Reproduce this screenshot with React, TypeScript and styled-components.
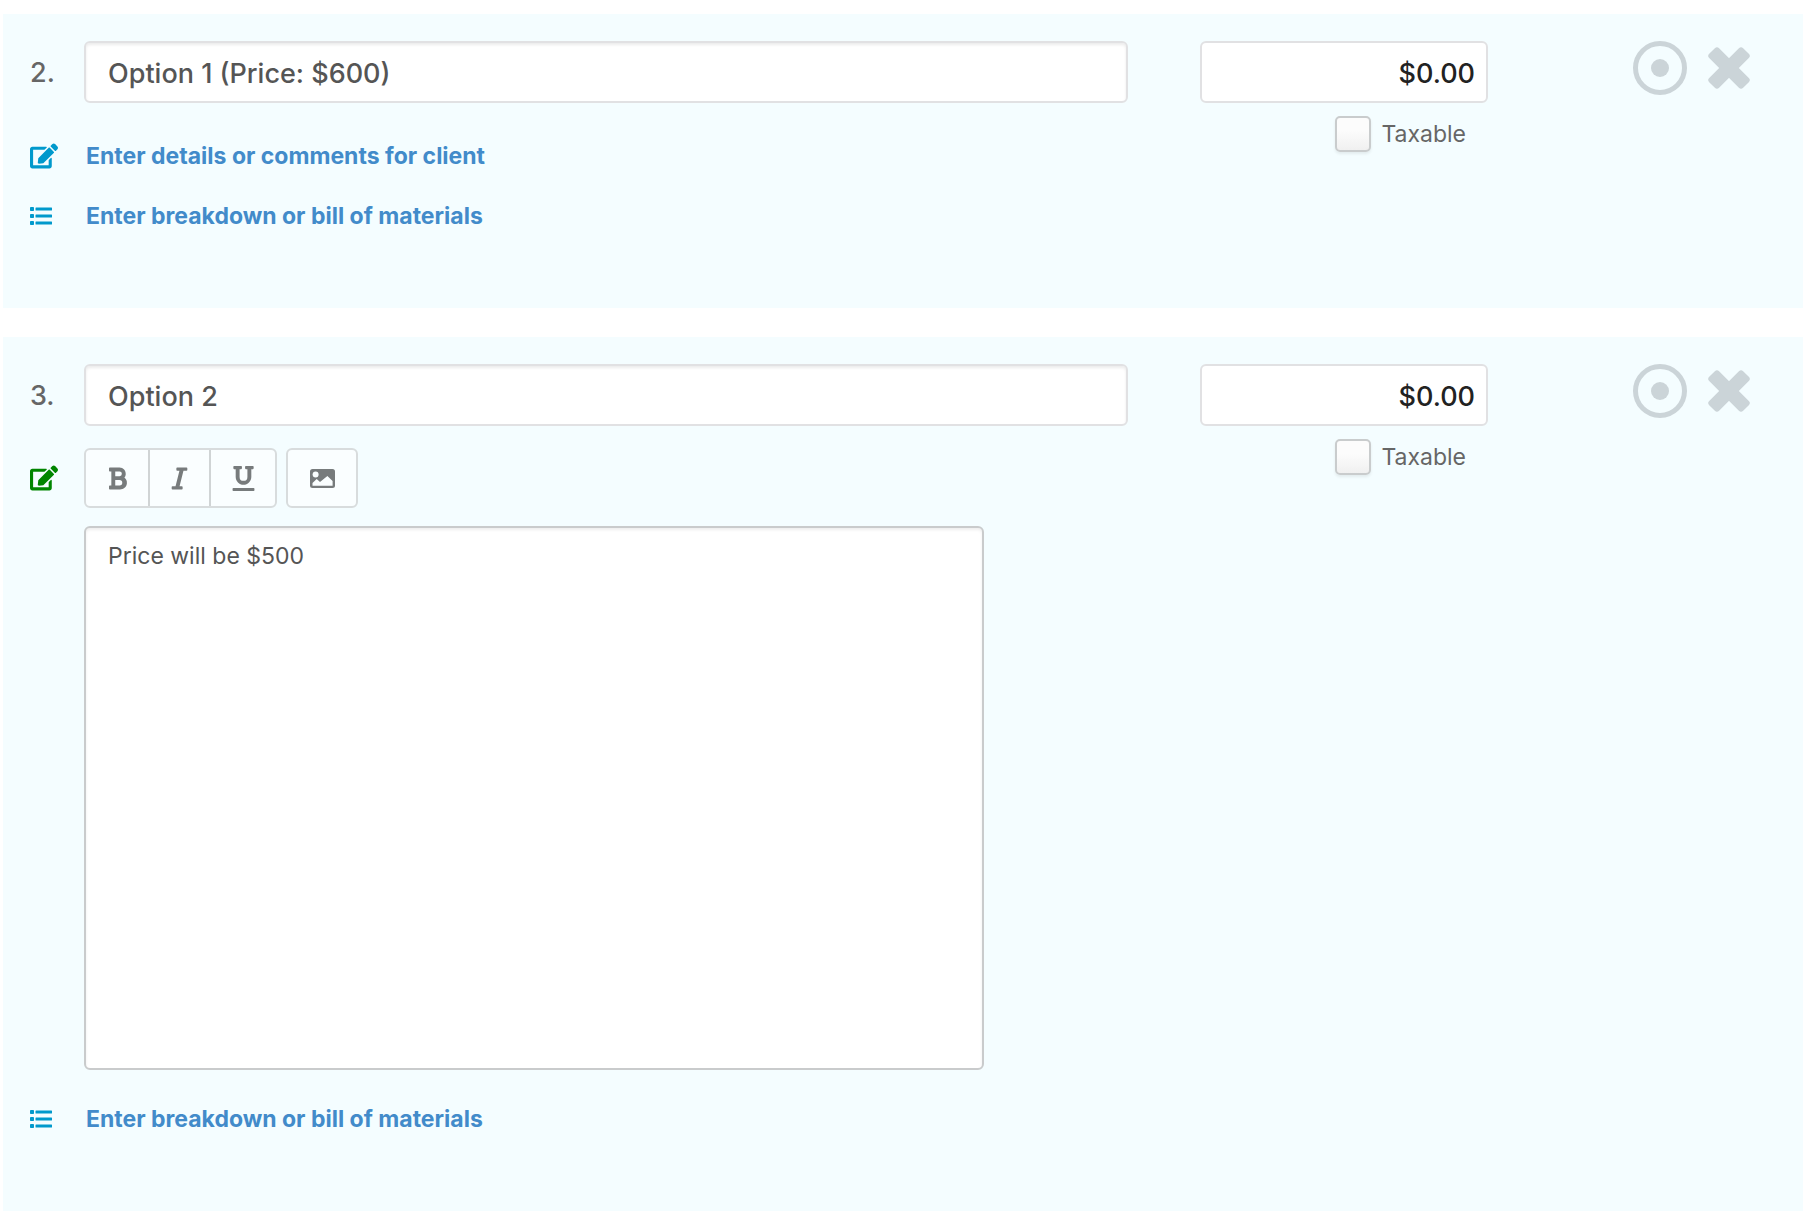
import React, { useId, useState } from 'react';
import styled, { createGlobalStyle } from 'styled-components';
import { FaBold, FaEdit, FaItalic, FaUnderline } from 'react-icons/fa';

const GlobalStyle = createGlobalStyle`
  *, *::before, *::after { box-sizing: border-box; }
  body {
    margin: 0;
    background: #fff;
    color: #666;
    font-family: Inter, "Liberation Sans", sans-serif;
    font-size: 23px;
    line-height: 30px;
  }
  button, input, textarea { font: inherit; margin: 0; }
`;

const Page = styled.main`
  display: flex;
  flex-direction: column;
  gap: 29px;
  padding: 14px 3px 4px;
`;

const Panel = styled.section`
  display: flex;
  align-items: flex-start;
  padding: 27px 53px 62px 27px;
  background: #f4fdff;
`;

const Main = styled.div`
  flex: 1;
  min-width: 0;
`;

const Row = styled.div<{ $gap?: number }>`
  display: flex;
  align-items: center;
  margin-top: ${(p) => p.$gap ?? 0}px;
`;

const Gutter = styled.div<{ $color?: string }>`
  display: flex;
  align-items: center;
  flex: 0 0 54px;
  color: ${(p) => p.$color ?? '#0099cc'};
`;

const ItemNumber = styled(Gutter)`
  padding-top: 2px;
  color: #666;
  font-size: 27px;
  font-weight: 500;
`;

const Field = styled.input`
  width: 100%;
  height: 62px;
  padding: 2px 22px 0;
  border: 2px solid #e1e1e3;
  border-radius: 6px;
  background: #fff;
  color: #555;
  font-size: 27px;
  font-weight: 500;
  outline: none;
`;

const TitleField = styled(Field)`
  box-shadow: inset 0 2px 3px rgba(0, 0, 0, 0.08);
`;

const PriceField = styled(Field)`
  padding: 2px 11px 0;
  color: #222;
  text-align: right;
`;

const LinkRow = styled(Row)`
  height: 60px;
`;

const ActionLink = styled.a`
  padding-left: 2px;
  color: #428bca;
  font-weight: 700;
  text-decoration: none;
`;

const Toolbar = styled.div`
  display: flex;
  gap: 9px;
`;

const ButtonGroup = styled.div`
  display: flex;
  border: 2px solid #d8dcdd;
  border-radius: 6px;
  background: #fafeff;
`;

const ToolButton = styled.button<{ $width: number }>`
  display: flex;
  align-items: center;
  justify-content: center;
  width: ${(p) => p.$width}px;
  height: 56px;
  padding: 0;
  border: 0;
  background: transparent;
  color: #777b7c;
  cursor: pointer;

  & + & { border-left: 2px solid #d0d4d5; }
`;

const Comments = styled.textarea`
  display: block;
  width: 100%;
  max-width: 900px;
  height: 544px;
  padding: 13px 22px;
  border: 2px solid #c9cbcc;
  border-radius: 6px;
  background: #fff;
  box-shadow: inset 0 2px 3px rgba(0, 0, 0, 0.07);
  color: #555;
  resize: none;
  outline: none;
`;

const PriceColumn = styled.div`
  flex: 0 0 288px;
  margin-left: 72px;
`;

const TaxableLabel = styled.label`
  display: flex;
  align-items: center;
  gap: 10px;
  margin: 13px 22px 0 0;
  justify-content: flex-end;
`;

const Checkbox = styled.input`
  appearance: none;
  width: 36px;
  height: 36px;
  border: 2px solid #c9cccd;
  border-radius: 5px;
  background: linear-gradient(#fcfcfc 40%, #f0f0f0);
  box-shadow: 0 2px 3px rgba(0, 0, 0, 0.07);

  &:checked { background: #0099cc; }
`;

const Actions = styled.div`
  display: flex;
  gap: 20px;
  margin-left: 144px;
`;

const IconButton = styled.button`
  display: flex;
  align-items: center;
  height: 54px;
  padding: 0;
  border: 0;
  background: none;
  color: #cbd4d8;
  cursor: pointer;
`;

const ListIcon = () => (
  <svg width="22" height="18" viewBox="0 0 22 18" fill="currentColor" aria-hidden="true">
    {[0, 7, 14].map((y) => (
      <g key={y}>
        <rect x="0" y={y} width="4" height="4" rx="0.8" />
        <rect x="5.5" y={y + 0.4} width="16.5" height="3.1" rx="0.5" />
      </g>
    ))}
  </svg>
);

const ImageIcon = () => (
  <svg width="25" height="19" viewBox="0 0 25 19" aria-hidden="true">
    <rect width="25" height="19" rx="2.5" fill="currentColor" />
    <circle cx="5.6" cy="5.6" r="3" fill="#fafeff" />
    <path d="M2.5 16.7v-2.6l4.2-4 3.3 3 7.4-6.2 5.2 5.1v4.7z" fill="#fafeff" />
  </svg>
);

const TargetIcon = () => (
  <svg width="56" height="54" viewBox="0 0 56 54" aria-hidden="true">
    <circle cx="28" cy="27" r="24.5" fill="none" stroke="currentColor" strokeWidth="5" />
    <circle cx="28" cy="27" r="9" fill="currentColor" />
  </svg>
);

const CrossIcon = () => (
  <svg width="42" height="42" viewBox="0 0 42 42" fill="currentColor" aria-hidden="true">
    <rect x="-3" y="14" width="48" height="14" rx="3" transform="rotate(45 21 21)" />
    <rect x="-3" y="14" width="48" height="14" rx="3" transform="rotate(-45 21 21)" />
  </svg>
);

function BreakdownLink({ gap }: { gap?: number }) {
  return (
    <LinkRow $gap={gap}>
      <Gutter><ListIcon /></Gutter>
      <ActionLink href="#breakdown">Enter breakdown or bill of materials</ActionLink>
    </LinkRow>
  );
}

function DetailsLink() {
  return (
    <LinkRow $gap={23}>
      <Gutter><FaEdit size={28} /></Gutter>
      <ActionLink href="#details">Enter details or comments for client</ActionLink>
    </LinkRow>
  );
}

function DetailsEditor({ text }: { text: string }) {
  return (
    <>
      <Row $gap={22}>
        <Gutter $color="#008500"><FaEdit size={28} /></Gutter>
        <Toolbar>
          <ButtonGroup>
            <ToolButton type="button" aria-label="Bold" $width={62}><FaBold size={25} /></ToolButton>
            <ToolButton type="button" aria-label="Italic" $width={61}><FaItalic size={25} /></ToolButton>
            <ToolButton type="button" aria-label="Underline" $width={66}><FaUnderline size={25} /></ToolButton>
          </ButtonGroup>
          <ButtonGroup>
            <ToolButton type="button" aria-label="Insert image" $width={68}><ImageIcon /></ToolButton>
          </ButtonGroup>
        </Toolbar>
      </Row>
      <Row $gap={18}>
        <Gutter />
        <Comments aria-label="Details or comments for client" defaultValue={text} spellCheck={false} />
      </Row>
    </>
  );
}

interface Item {
  number: number;
  title: string;
  price: string;
  details?: string;
}

const ITEMS: Item[] = [
  { number: 2, title: 'Option 1 (Price: $600)', price: '$0.00' },
  { number: 3, title: 'Option 2', price: '$0.00', details: 'Price will be $500' },
];

function LineItem({ item }: { item: Item }) {
  const id = useId();
  const [taxable, setTaxable] = useState(false);
  const editing = item.details !== undefined;

  return (
    <Panel>
      <Main>
        <Row>
          <ItemNumber as="label" htmlFor={`${id}-title`}>{item.number}.</ItemNumber>
          <TitleField id={`${id}-title`} type="text" defaultValue={item.title} spellCheck={false} />
        </Row>
        {editing ? <DetailsEditor text={item.details!} /> : <DetailsLink />}
        <BreakdownLink gap={editing ? 19 : 0} />
      </Main>
      <PriceColumn>
        <PriceField type="text" aria-label="Price" defaultValue={item.price} />
        <TaxableLabel htmlFor={`${id}-taxable`}>
          <Checkbox
            id={`${id}-taxable`}
            type="checkbox"
            checked={taxable}
            onChange={(e) => setTaxable(e.target.checked)}
          />
          Taxable
        </TaxableLabel>
      </PriceColumn>
      <Actions>
        <IconButton type="button" aria-label="Item options"><TargetIcon /></IconButton>
        <IconButton type="button" aria-label="Remove item"><CrossIcon /></IconButton>
      </Actions>
    </Panel>
  );
}

export default function App() {
  return (
    <>
      <GlobalStyle />
      <Page>
        {ITEMS.map((item) => (
          <LineItem key={item.number} item={item} />
        ))}
      </Page>
    </>
  );
}
